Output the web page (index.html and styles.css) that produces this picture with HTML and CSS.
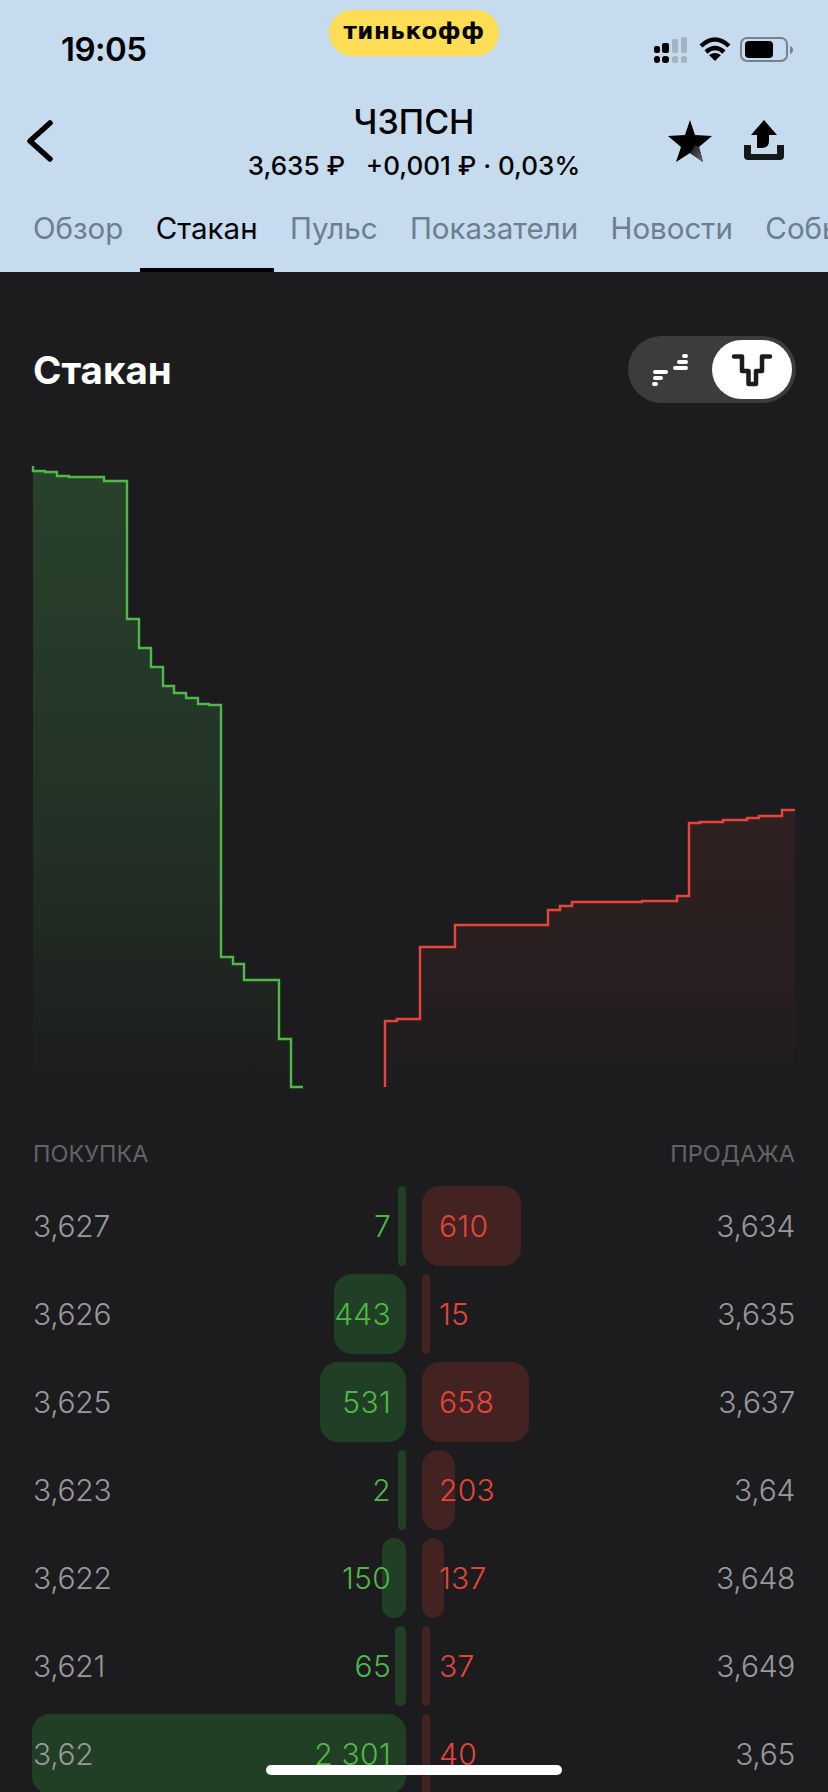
FILE: index.html
```html
<!DOCTYPE html>
<html lang="ru">
<head>
  <meta charset="UTF-8">
  <meta name="viewport" content="width=device-width, initial-scale=1.0">
  <title>ЧЗПСН — Стакан</title>
  <link rel="stylesheet" href="styles.css">
</head>
<body>
  <div id="screen">
    <header id="top">
      <div class="status">
        <span class="time">19:05</span>
        <span class="brand">тинькофф</span>
        <svg class="status-icons" width="140" height="26" viewBox="655 37 140 26">
          <g fill="#000">
            <rect x="655" y="46" width="6" height="7" rx="2"/>
            <rect x="663" y="43" width="7" height="10" rx="2"/>
            <rect x="655" y="56" width="6" height="7" rx="3"/>
            <rect x="663" y="56" width="7" height="7" rx="3"/>
          </g>
          <g fill="#a5b4c2">
            <rect x="673" y="39" width="6" height="14" rx="2"/>
            <rect x="682" y="37" width="6" height="16" rx="2"/>
            <rect x="673" y="56" width="6" height="7" rx="2"/>
            <rect x="682" y="56" width="6" height="7" rx="2"/>
          </g>
          <g fill="none" stroke="#000" stroke-width="4.4">
            <path d="M702 46 Q716 33 730 46"/>
            <path d="M707 52 Q716 44 725 52"/>
          </g>
          <path d="M710 55 Q716 51 722 55 L716 61Z" fill="#000"/>
          <rect x="742" y="38" width="46" height="23" rx="6" fill="none" stroke="#76838f" stroke-width="2"/>
          <rect x="746" y="41" width="28" height="17" rx="4" fill="#000"/>
          <path d="M791 46 q3 1 3 4 t-3 4z" fill="#76838f"/>
        </svg>
      </div>
      <div class="nav">
        <svg class="back" width="60" height="50" viewBox="20 114 60 50">
          <path d="M50 121 L30 139 L50 157" fill="none" stroke="#000" stroke-width="5.500" stroke-linecap="round" stroke-linejoin="round"/>
        </svg>
        <div class="ticker">
          <div class="ticker-name">ЧЗПСН</div>
          <div class="ticker-price">3,635 ₽&nbsp;&nbsp; +0,001 ₽ · 0,03%</div>
        </div>
        <svg class="actions" width="120" height="44" viewBox="666 117 120 44">
          <defs>
            <linearGradient id="star-shade" x1="0" y1="0" x2="1" y2="1">
              <stop offset="0" stop-color="#111"/>
              <stop offset="1" stop-color="#6a6f73"/>
            </linearGradient>
          </defs>
          <path d="M690 118 L695 133 L712 134 L699 145 L703 160 L690 151 L676 160 L681 145 L668 134 L685 133Z" fill="#000"/>
          <path d="M690 151 L703 160 L699 145 L695 143Z" fill="url(#star-shade)"/>
          <path d="M764 118 L777 133 H769 V139 Q769 146 762 146 H757 V133 H751Z" fill="#000"/>
          <path d="M744 143 H751 V152 H777 V143 H784 V154 Q784 158 780 158 H748 Q744 158 744 154Z" fill="#14181c"/>
        </svg>
      </div>
      <nav class="tabs">
        <span class="tab">Обзор</span>
        <span class="tab active">Стакан</span>
        <span class="tab">Пульс</span>
        <span class="tab">Показатели</span>
        <span class="tab">Новости</span>
        <span class="tab">События</span>
      </nav>
    </header>

    <main id="content">
      <div class="section-head">
        <h2>Стакан</h2>
        <div class="toggle">
          <svg class="toggle-bars" width="40" height="36" viewBox="650 350 40 36">
            <g fill="#fff">
              <rect x="653" y="368" width="15" height="4" rx="2"/>
              <rect x="653" y="374" width="10" height="4" rx="2"/>
              <rect x="652" y="380" width="6" height="4" rx="2"/>
              <rect x="682" y="352" width="6" height="4" rx="2"/>
              <rect x="677" y="358" width="11" height="4" rx="2"/>
              <rect x="673" y="364" width="15" height="4" rx="2"/>
            </g>
          </svg>
          <div class="toggle-knob">
            <svg width="42" height="34" viewBox="732 352 42 34">
              <path d="M735 355.500 H743 V370 H749.500 V383 H757 V370 H763 V355.500 H771" fill="none" stroke="#1c1c1e" stroke-width="4.500" stroke-linecap="round" stroke-linejoin="round"/>
            </svg>
          </div>
        </div>
      </div>

      <svg class="depth" width="828" height="717" viewBox="0 403 828 717">
        <defs>
          <linearGradient id="fill-buy" gradientUnits="userSpaceOnUse" x1="0" y1="466" x2="0" y2="1087">
            <stop offset="0" stop-color="#4caf50" stop-opacity="0.26"/>
            <stop offset="0.6" stop-color="#4caf50" stop-opacity="0.14"/>
            <stop offset="1" stop-color="#4caf50" stop-opacity="0"/>
          </linearGradient>
          <linearGradient id="fill-sell" gradientUnits="userSpaceOnUse" x1="0" y1="809" x2="0" y2="1087">
            <stop offset="0" stop-color="#e5453b" stop-opacity="0.1"/>
            <stop offset="0.6" stop-color="#e5453b" stop-opacity="0.06"/>
            <stop offset="1" stop-color="#e5453b" stop-opacity="0"/>
          </linearGradient>
        </defs>
        <path fill="url(#fill-buy)" d="M33 466 V471 H45 V472 H57 V476 H69 V477 H104 V481 H127 V619 H139 V648 H151 V667 H163 V686 H174 V693 H186 V698 H198 V704 H209 V705 H221 V957 H233 V964 H244 V980 H279 V1039 H291 V1087 H303 V1090 H33Z"/>
        <path fill="none" stroke="#4fb848" stroke-width="2.400" d="M33 466 V471 H45 V472 H57 V476 H69 V477 H104 V481 H127 V619 H139 V648 H151 V667 H163 V686 H174 V693 H186 V698 H198 V704 H209 V705 H221 V957 H233 V964 H244 V980 H279 V1039 H291 V1087 H303"/>
        <path fill="url(#fill-sell)" d="M385 1087 V1021 H397 V1019 H420 V947 H455 V925 H548 V910 H560 V906 H572 V902 H642 V901 H677 V896 H689 V823 H700 V822 H712 V822 H723 V820 H747 V818 H759 V816 H782 V810 H795 V1090 H385Z"/>
        <path fill="none" stroke="#e5453b" stroke-width="2.400" d="M385 1087 V1021 H397 V1019 H420 V947 H455 V925 H548 V910 H560 V906 H572 V902 H642 V901 H677 V896 H689 V823 H700 V822 H712 V822 H723 V820 H747 V818 H759 V816 H782 V810 H795"/>
      </svg>

      <div class="book-head">
        <span>ПОКУПКА</span>
        <span>ПРОДАЖА</span>
      </div>

      <div class="book">
        <div class="row">
          <div class="side buy"><i class="bar" style="width:8px"></i><span class="price">3,627</span><span class="qty">7</span></div>
          <div class="side sell"><i class="bar" style="width:99px"></i><span class="qty">610</span><span class="price">3,634</span></div>
        </div>
        <div class="row">
          <div class="side buy"><i class="bar" style="width:72px"></i><span class="price">3,626</span><span class="qty">443</span></div>
          <div class="side sell"><i class="bar" style="width:8px"></i><span class="qty">15</span><span class="price">3,635</span></div>
        </div>
        <div class="row">
          <div class="side buy"><i class="bar" style="width:86px"></i><span class="price">3,625</span><span class="qty">531</span></div>
          <div class="side sell"><i class="bar" style="width:107px"></i><span class="qty">658</span><span class="price">3,637</span></div>
        </div>
        <div class="row">
          <div class="side buy"><i class="bar" style="width:8px"></i><span class="price">3,623</span><span class="qty">2</span></div>
          <div class="side sell"><i class="bar" style="width:33px"></i><span class="qty">203</span><span class="price">3,64</span></div>
        </div>
        <div class="row">
          <div class="side buy"><i class="bar" style="width:24px"></i><span class="price">3,622</span><span class="qty">150</span></div>
          <div class="side sell"><i class="bar" style="width:22px"></i><span class="qty">137</span><span class="price">3,648</span></div>
        </div>
        <div class="row">
          <div class="side buy"><i class="bar" style="width:11px"></i><span class="price">3,621</span><span class="qty">65</span></div>
          <div class="side sell"><i class="bar" style="width:8px"></i><span class="qty">37</span><span class="price">3,649</span></div>
        </div>
        <div class="row">
          <div class="side buy"><i class="bar" style="width:374px"></i><span class="price">3,62</span><span class="qty">2 301</span></div>
          <div class="side sell"><i class="bar" style="width:8px"></i><span class="qty">40</span><span class="price">3,65</span></div>
        </div>
      </div>
    </main>

    <div id="home-bar"></div>
  </div>
</body>
</html>
```

FILE: styles.css
```css
* {
  box-sizing: border-box;
}
body {
  margin: 0;
  background: #1c1c1e;
  font-family: Inter, 'Noto Sans', sans-serif;
}
#screen {
  position: relative;
  width: 828px;
  height: 1792px;
  overflow: hidden;
}
#top {
  height: 272px;
  background: #c6dbed;
  color: #000;
}
.status {
  display: grid;
  grid-template-columns: 268px 170px 1fr;
  height: 66px;
  padding: 10px 34px 0 61px;
}
.time {
  align-self: end;
  font-size: 33px;
  line-height: 33px;
  font-weight: 600;
  letter-spacing: -0.5px;
}
.brand {
  height: 46px;
  border-radius: 23px;
  background: #ffdd55;
  font-family: 'DejaVu Sans', sans-serif;
  font-size: 23px;
  font-weight: 700;
  line-height: 43px;
  letter-spacing: 0.5px;
  text-align: center;
}
.status-icons {
  justify-self: end;
  align-self: end;
  margin-bottom: 3px;
}
.nav {
  display: grid;
  grid-template-columns: 1fr auto 1fr;
  align-items: center;
  height: 80px;
  margin-top: 35px;
  padding: 0 42px;
}
.back {
  margin-left: -22px;
}
.actions {
  justify-self: end;
}
.ticker {
  text-align: center;
}
.ticker-name {
  font-size: 34px;
  line-height: 40px;
  font-weight: 500;
}
.ticker-price {
  margin-top: 9px;
  font-size: 26px;
  line-height: 30px;
  font-weight: 500;
}
.tabs {
  display: flex;
  padding: 0 16.8px;
  white-space: nowrap;
}
.tab {
  padding: 29px 16.2px 22px;
  border-bottom: 4px solid transparent;
  font-size: 29.5px;
  line-height: 36px;
  color: #6b7f8e;
}
.tab.active {
  color: #000;
  border-bottom-color: #000;
}
.section-head {
  display: flex;
  justify-content: space-between;
  align-items: center;
  height: 67px;
  margin-top: 64px;
  padding: 0 32px 0 33px;
}
h2 {
  margin: 0;
  color: #fff;
  font-size: 38.5px;
  font-weight: 700;
}
.toggle {
  display: flex;
  align-items: center;
  justify-content: space-between;
  width: 168px;
  height: 67px;
  padding: 0 4px 0 22px;
  border-radius: 34px;
  background: #3c3c3e;
}
.toggle-knob {
  display: flex;
  align-items: center;
  justify-content: center;
  width: 80px;
  height: 59px;
  border-radius: 30px;
  background: #fff;
}
.depth {
  display: block;
}
.book-head {
  display: flex;
  justify-content: space-between;
  padding: 0 33px;
  height: 28px;
  margin-top: 20px;
  color: #636366;
  font-size: 23.5px;
  line-height: 28px;
}
.book {
  display: flex;
  flex-direction: column;
  gap: 8px;
  margin-top: 18px;
  padding: 0 33px;
}
.row {
  display: grid;
  grid-template-columns: 373px 373px;
  gap: 16px;
  height: 80px;
}
.side {
  position: relative;
  display: flex;
  justify-content: space-between;
  align-items: center;
  font-size: 30px;
  font-weight: 300;
  letter-spacing: -0.3px;
}
.side span {
  position: relative;
}
.bar {
  position: absolute;
  top: 0;
  bottom: 0;
  border-radius: 18px;
}
.price {
  color: #98989d;
}
.buy .bar {
  right: 0;
  background: #213f24;
}
.buy .qty {
  margin-right: 15px;
  color: #4fb848;
  letter-spacing: 0.3px;
}
.sell .bar {
  left: 0;
  background: #432222;
}
.sell .qty {
  margin-left: 17px;
  color: #e5453b;
  letter-spacing: 0.3px;
}
#home-bar {
  position: absolute;
  left: 266px;
  top: 1765px;
  width: 296px;
  height: 10px;
  border-radius: 5px;
  background: #fff;
}
```
